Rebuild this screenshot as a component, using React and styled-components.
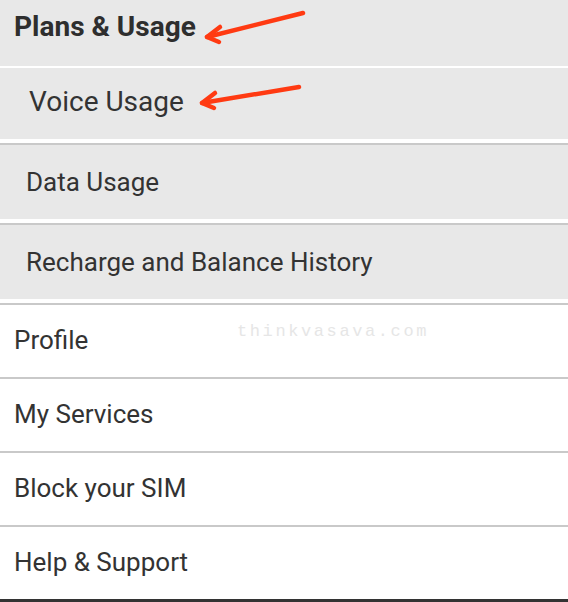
import styled, { createGlobalStyle } from 'styled-components';

const Global = createGlobalStyle`
  html, body { margin: 0; padding: 0; background: #fff; }
  body { font-family: Roboto, "Noto Sans", Arial, sans-serif; color: #333; }
`;

const Page = styled.div`
  position: relative;
  width: 568px;
  height: 602px;
  overflow: hidden;
  background: #fff;
`;

const Header = styled.div`
  height: 56px;
  padding: 10px 0 0 14px;
  background: #e8e8e8;
  border-bottom: 2px solid #fff;
  font-size: 28px;
  font-weight: 700;
  color: #2e2e2e;
`;

const SubList = styled.div`
  display: flex;
  flex-direction: column;
`;

const SubItem = styled.div`
  display: flex;
  align-items: center;
  box-sizing: border-box;
  height: ${p => p.$h || 74}px;
  padding-left: ${p => p.$indent || 26}px;
  padding-bottom: ${p => p.$lift || 0}px;
  background: #e8e8e8;
  font-size: ${p => p.$size || 26}px;
  color: #333;
  & + & {
    margin-top: 4px;
    border-top: 2px solid #c9c9c9;
    height: ${p => (p.$h || 74) + 2}px;
  }
`;

const MainList = styled.div`
  margin-top: 4px;
  border-bottom: 3px solid #333;
`;

const MainItem = styled.div`
  position: relative;
  display: flex;
  align-items: center;
  height: 72px;
  padding: 0 0 3px 14px;
  box-sizing: content-box;
  height: 69px;
  border-top: 2px solid #c9c9c9;
  font-size: 26px;
  color: #333;
`;

const Watermark = styled.span`
  position: absolute;
  left: 237px;
  top: 17px;
  font-family: "Liberation Mono", "Courier New", monospace;
  font-size: 17px;
  letter-spacing: 2.6px;
  color: #e6e6e6;
`;

const Arrows = styled.svg`
  position: absolute;
  left: 0;
  top: 0;
  pointer-events: none;
`;

function Arrow({ x1, y1, x2, y2, b1, b2 }) {
  return (
    <g stroke="#ff3a12" strokeWidth="4.5" strokeLinecap="round" strokeLinejoin="round" fill="none">
      <path d={`M${x1} ${y1} L${x2} ${y2}`} />
      <path d={`M${b1[0]} ${b1[1]} L${x2} ${y2} L${b2[0]} ${b2[1]}`} />
    </g>
  );
}

const subItems = [
  { label: 'Voice Usage', h: 71, indent: 29, size: 28, lift: 4 },
  { label: 'Data Usage', lift: 1 },
  { label: 'Recharge and Balance History', lift: 1 },
];

const mainItems = ['Profile', 'My Services', 'Block your SIM', 'Help & Support'];

export default function App() {
  return (
    <Page>
      <Global />
      <Header>Plans &amp; Usage</Header>
      <SubList>
        {subItems.map(it => (
          <SubItem key={it.label} $h={it.h} $indent={it.indent} $size={it.size} $lift={it.lift}>
            {it.label}
          </SubItem>
        ))}
      </SubList>
      <MainList>
        {mainItems.map((m, i) => (
          <MainItem key={m}>
            {m}
            {i === 0 && <Watermark>thinkvasava.com</Watermark>}
          </MainItem>
        ))}
      </MainList>
      <Arrows width="568" height="140" viewBox="0 0 568 140">
        <Arrow x1={303} y1={13} x2={207} y2={37} b1={[220, 27]} b2={[219, 42]} />
        <Arrow x1={299} y1={87} x2={202} y2={103} b1={[215, 93]} b2={[214, 108]} />
      </Arrows>
    </Page>
  );
}
